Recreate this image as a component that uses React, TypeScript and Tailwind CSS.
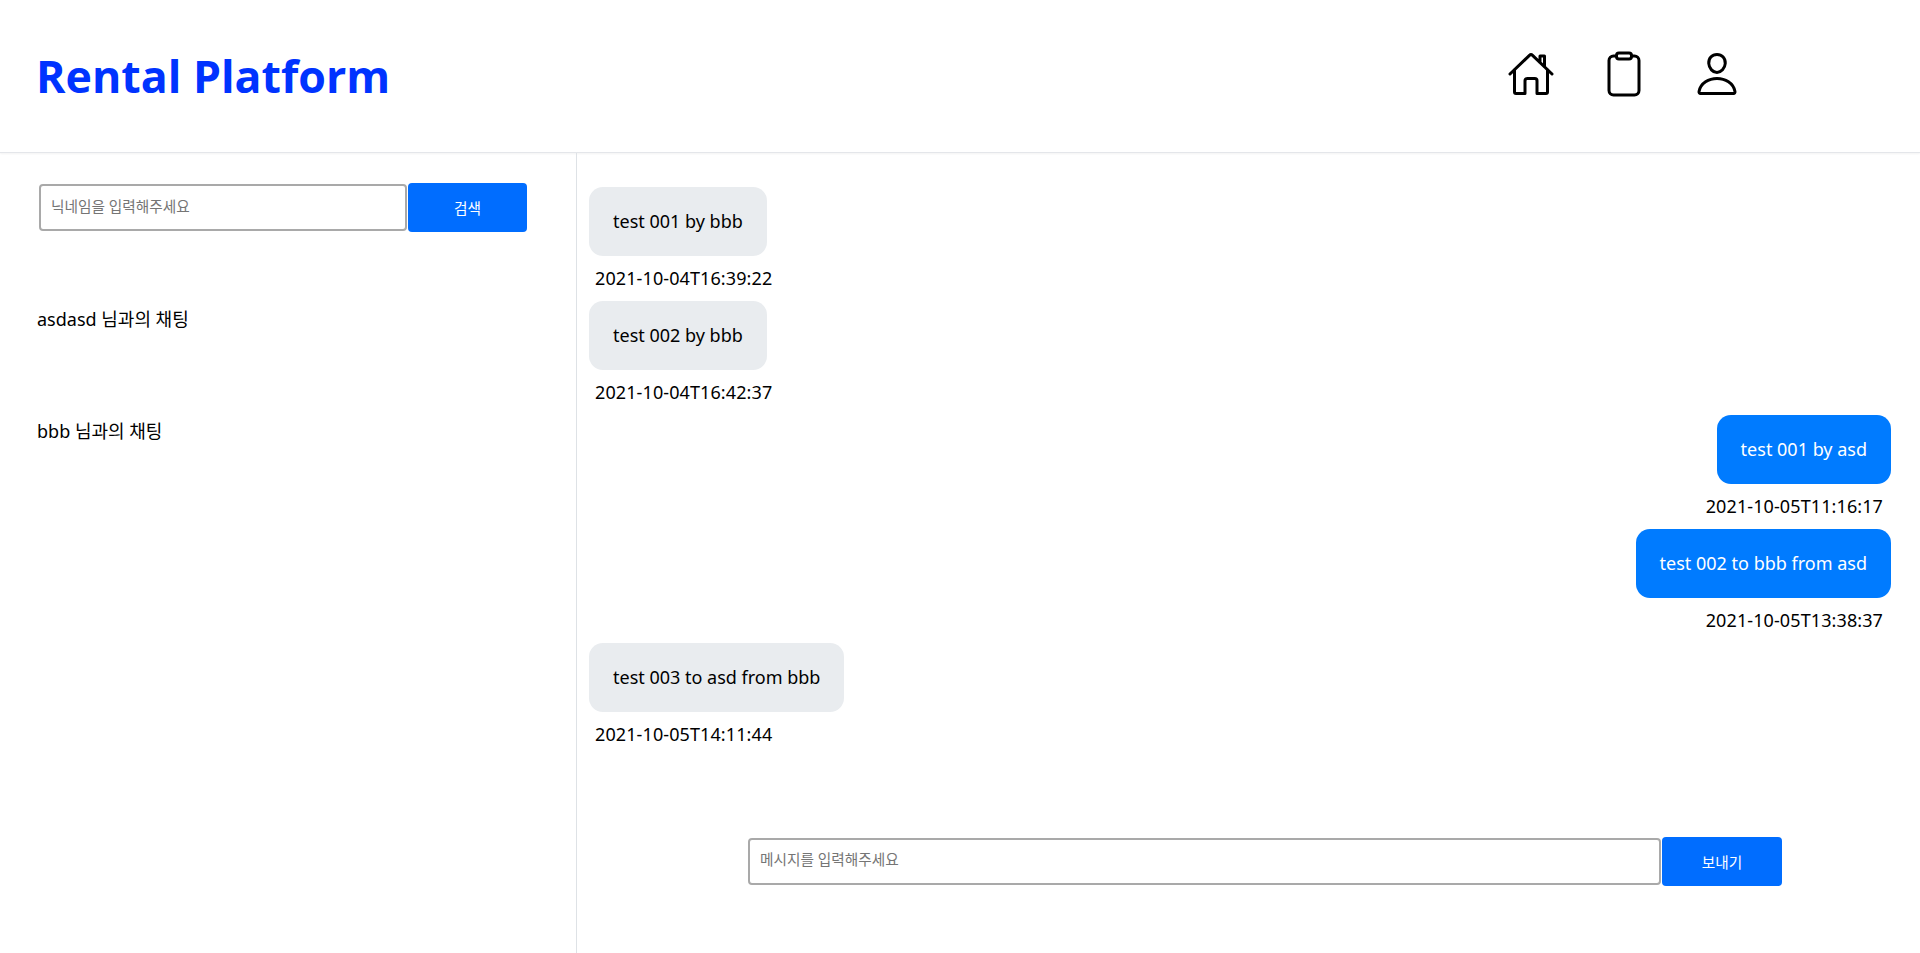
import React from "react";
import { IoHomeOutline, IoClipboardOutline, IoPersonOutline } from "react-icons/io5";

interface Message {
  text: string;
  time: string;
  mine: boolean;
}

const messages: Message[] = [
  { text: "test 001 by bbb", time: "2021-10-04T16:39:22", mine: false },
  { text: "test 002 by bbb", time: "2021-10-04T16:42:37", mine: false },
  { text: "test 001 by asd", time: "2021-10-05T11:16:17", mine: true },
  { text: "test 002 to bbb from asd", time: "2021-10-05T13:38:37", mine: true },
  { text: "test 003 to asd from bbb", time: "2021-10-05T14:11:44", mine: false },
];

const rooms = ["asdasd 님과의 채팅", "bbb 님과의 채팅"];

const App: React.FC = () => {
  return (
    <div className="h-[953px] flex flex-col bg-white text-black text-[18px] font-['Noto_Sans','Noto_Sans_CJK_KR',sans-serif] overflow-hidden">
      <header className="h-[153px] shrink-0 flex items-center border-b border-[#e4e6ea] shadow-[0_1px_2px_rgba(0,0,0,0.05)]">
        <h1 className="pl-[36px] flex-1 text-[44.7px] font-bold text-[#0033ff] font-['Open_Sans','Noto_Sans_CJK_KR',sans-serif]">
          Rental Platform
        </h1>
        <nav className="flex gap-[45px] mr-[179px] -mt-[4px]">
          <IoHomeOutline size={48} />
          <IoClipboardOutline size={48} />
          <IoPersonOutline size={48} />
        </nav>
      </header>
      <div className="flex flex-1 min-h-0">
        <aside className="w-[577px] shrink-0 border-r border-[#dee2e6]">
          <div className="flex items-center pl-[39px] pt-[30px]">
            <input
              placeholder="닉네임을 입력해주세요"
              className="w-[368px] h-[47px] px-[10px] pb-[4px] text-[14.67px] border-2 border-[#a9a9a9] rounded-[4px] placeholder:text-[#757575]"
            />
            <button className="w-[119px] h-[49px] ml-px bg-[#006dff] text-white text-[14.67px] rounded-[4px]">
              검색
            </button>
          </div>
          <ul className="pl-[37px] pt-[74px]">
            {rooms.map((room) => (
              <li key={room} className="h-[112px] leading-[27px]">
                {room}
              </li>
            ))}
          </ul>
        </aside>
        <main className="flex-1 flex flex-col min-w-0">
          <div className="flex-1 pl-[12px] pr-[29px] pt-[34px]">
            {messages.map((m) => (
              <div key={m.time} className={`flex flex-col h-[114px] ${m.mine ? "items-end" : "items-start"}`}>
                <div
                  className={`h-[68.5px] px-[24px] flex items-center rounded-[14px] ${
                    m.mine ? "bg-[#007bff] text-white" : "bg-[#e9ecef] text-black"
                  }`}
                >
                  {m.text}
                </div>
                <div className="mt-[9px] pl-[6px] pr-[8px] leading-[27px] tracking-[0.1px]">{m.time}</div>
              </div>
            ))}
          </div>
          <div className="flex items-center pl-[171px] pb-[67px]">
            <input
              placeholder="메시지를 입력해주세요"
              className="w-[913px] h-[47px] px-[10px] pb-[5px] text-[14.67px] border-2 border-[#a9a9a9] rounded-[4px] placeholder:text-[#757575]"
            />
            <button className="w-[120px] h-[49px] ml-px bg-[#006dff] text-white text-[14.67px] rounded-[4px]">
              보내기
            </button>
          </div>
        </main>
      </div>
    </div>
  );
};

export default App;
